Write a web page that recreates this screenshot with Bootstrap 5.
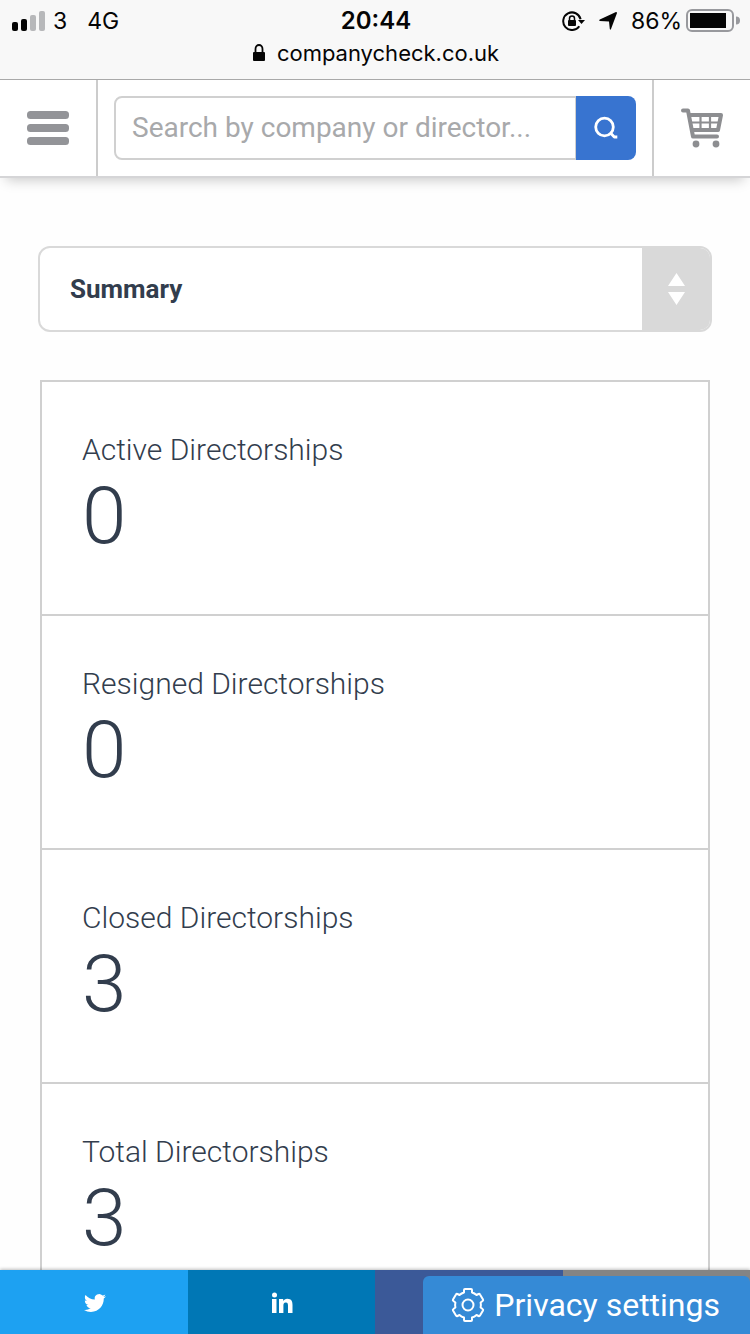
<!DOCTYPE html>
<html lang="en">
<head>
<meta charset="utf-8">
<meta name="viewport" content="width=device-width, initial-scale=1">
<title>Company Check – Directorships</title>
<link href="https://cdn.jsdelivr.net/npm/bootstrap@5.3.0/dist/css/bootstrap.min.css" rel="stylesheet">
<style>
  body { font-family: Roboto, "Liberation Sans", sans-serif; color: #323d4d; background: #fefefe; }
  .status { background: #f8f8f8; border-bottom: 1px solid #a9a9a9; color: #050505; font: 23px/28px Inter, sans-serif; padding: 7px 10px 8px 12px; }
  .status-row { display: grid; grid-template-columns: 1fr auto 1fr; align-items: center; height: 28px; }
  .clock { font-size: 24px; font-weight: 600; }
  .locate { margin: 0 14px; }
  .address { height: 36px; line-height: 36px; font-size: 22px; }
  .topbar { background: #fff; height: 98px; border-bottom: 2px solid #d5d5d7; box-shadow: 0 8px 12px -6px rgba(0,0,0,.22); z-index: 2; }
  .side-btn { width: 98px; background: none; color: #939498; border-radius: 0; }
  .side-left { border: 0 solid #ccc; border-right-width: 2px; }
  .side-right { border: 0 solid #ccc; border-left-width: 2px; }
  .search-box { padding: 0 16px; }
  .search-box .form-control { height: 64px; border: 2px solid #d0d0d0; border-radius: 8px; font-size: 28px; padding: 0 16px 2px; background: #fff; }
  .search-box .form-control::placeholder { color: #a8a9ab; opacity: 1; }
  .search-btn { width: 60px; background: #3874d0; border-radius: 8px; }
  .content { padding: 68px 38px 0; }
  .picker { border: 2px solid #d9d9d9; border-radius: 12px; background: #fff; height: 86px; }
  .picker select { appearance: none; border: 0; background: none; padding: 0 30px; font-size: 26px; font-weight: 700; color: #323d4d; }
  .picker-arrows { width: 68px; background: #d9d9d9; pointer-events: none; }
  .stats { margin: 48px 2px 0; border: 2px solid #d0d0d0; background: #fff; }
  .stat { padding: 49px 40px 48px; border-bottom: 2px solid #d0d0d0; font-weight: 300; }
  .stat dt { font-size: 30px; line-height: 38px; font-weight: 300; }
  .stat dd { font-size: 80px; line-height: 95px; margin: 0 0 2px; }
  .share { height: 64px; box-shadow: 0 -1px 3px rgba(0,0,0,.25); z-index: 2; }
  .share a { color: #fff; padding: 2px 0 0 2px; }
  .tw { background: #1da1f2; } .li { background: #0077b5; } .fb { background: #3b5998; } .em { background: #848484; }
  .privacy { right: 0; bottom: 0; height: 58px; width: 327px; background: #358ad6; color: #fff; font-size: 32px; line-height: 40px; border-radius: 6px 6px 0 0; padding: 0 30px 0 28px; }
  .privacy:hover, .privacy:focus { background: #2d7fc9; color: #fff; }
</style>
</head>
<body>
<div class="d-flex flex-column vh-100 overflow-hidden">
  <div class="status flex-shrink-0">
    <div class="status-row">
      <div class="d-flex align-items-center">
        <svg width="33" height="20" viewBox="0 0 33 20" aria-hidden="true"><g fill="#050505"><rect x="0" y="11" width="6" height="9" rx="2"/><rect x="9" y="8" width="6" height="12" rx="2"/></g><g fill="#b7b8ba"><rect x="18" y="4" width="6" height="16" rx="2"/><rect x="27" y="0" width="6" height="20" rx="2"/></g></svg>
        <span class="ms-2">3</span><span class="ms-3 ps-1">4G</span>
      </div>
      <div class="clock">20:44</div>
      <div class="d-flex align-items-center justify-content-end">
        <svg width="23" height="20" viewBox="0 0 23 20" aria-hidden="true"><path d="M17.300 15.200A8.800 8.800 0 1 1 18.600 8.200" fill="none" stroke="#050505" stroke-width="2"/><path d="M16 9h7l-3.500 4z" fill="#050505"/><rect x="6" y="9" width="8" height="6" rx="1" fill="#050505"/><path d="M7.500 9.500V7.500a2.500 2.500 0 0 1 5 0v2" fill="none" stroke="#050505" stroke-width="1.500"/></svg>
        <svg class="locate" width="18" height="18" viewBox="0 0 18 18" aria-hidden="true"><path d="M17 0q1 0 1 1L12 17q-.7 1.500-1.200 0L10 9.500.800 9Q-.500 8.300.800 7.500z" fill="#050505"/></svg>
        <span>86%</span>
        <svg class="ms-1" width="54" height="24" viewBox="0 0 54 24" aria-hidden="true"><rect x="1" y="1" width="46" height="21" rx="5" fill="none" stroke="#98999d" stroke-width="2"/><rect x="4" y="4" width="36" height="15" fill="#050505"/><path d="M50 7.500a4 4 0 0 1 0 8z" fill="#98999d"/></svg>
      </div>
    </div>
    <div class="address d-flex justify-content-center align-items-center">
      <svg width="12" height="18" viewBox="0 0 12 18" aria-hidden="true"><rect y="8" width="12" height="9" rx="1" fill="#050505"/><path d="M2.500 9V5a3.500 4 0 0 1 7 0v4" fill="none" stroke="#050505" stroke-width="1.800"/></svg>
      <span class="ms-2 ps-1">companycheck.co.uk</span>
    </div>
  </div>

  <header class="topbar d-flex align-items-stretch flex-shrink-0 position-relative">
    <button type="button" class="side-btn side-left p-0" aria-label="Menu">
      <svg width="42" height="34" viewBox="0 0 42 34" fill="currentColor"><rect width="42" height="8" rx="3.500"/><rect y="13" width="42" height="8" rx="3.500"/><rect y="26" width="42" height="8" rx="3.500"/></svg>
    </button>
    <form class="search-box flex-grow-1 d-flex align-items-center" role="search">
      <div class="input-group">
        <input type="search" class="form-control" placeholder="Search by company or director..." aria-label="Search by company or director">
        <button type="button" class="btn search-btn p-0" aria-label="Search">
          <svg width="24" height="24" viewBox="0 0 24 24" fill="none" stroke="#fff" stroke-width="2.800"><circle cx="10.500" cy="11" r="8.800"/><path d="m16.500 17 3.800 4h3" stroke-linejoin="round"/></svg>
        </button>
      </div>
    </form>
    <button type="button" class="side-btn side-right p-0" aria-label="Basket">
      <svg width="42" height="40" viewBox="0 0 42 40" fill="none" stroke="#8d8e91"><path d="M2 2.500h5L12 28.500h24" stroke-width="4" stroke-linecap="round" stroke-linejoin="round"/><path d="M9 7h31l-3 15H12" stroke-width="4" stroke-linejoin="round"/><path d="M10 14.500h28M19.500 7v16M29 7v16" stroke-width="2.200"/><g fill="#8d8e91" stroke="none"><circle cx="15" cy="36" r="3.400"/><circle cx="35" cy="36" r="3.400"/></g></svg>
    </button>
  </header>

  <main class="content flex-grow-1 overflow-hidden">
    <div class="picker d-flex overflow-hidden">
      <select class="flex-grow-1" aria-label="Section">
        <option selected>Summary</option>
      </select>
      <span class="picker-arrows d-flex align-items-center justify-content-center">
        <svg width="17" height="34" viewBox="0 0 17 34" fill="#fff" aria-hidden="true"><path d="M8.500 1 17 14H0zM0 20h17L8.500 33z"/></svg>
      </span>
    </div>
    <dl class="stats">
      <div class="stat"><dt>Active Directorships</dt><dd>0</dd></div>
      <div class="stat"><dt>Resigned Directorships</dt><dd>0</dd></div>
      <div class="stat"><dt>Closed Directorships</dt><dd>3</dd></div>
      <div class="stat"><dt>Total Directorships</dt><dd>3</dd></div>
    </dl>
  </main>

  <footer class="share row g-0 flex-shrink-0 position-relative">
    <a href="#" class="col tw d-flex align-items-center justify-content-center" aria-label="Share on Twitter">
      <svg width="22" height="22" viewBox="0 0 24 24" fill="currentColor"><path d="M23.950 4.570a10 10 0 0 1-2.820.770 4.960 4.960 0 0 0 2.160-2.720c-.950.550-2 .950-3.130 1.180a4.920 4.920 0 0 0-8.380 4.480C7.690 8.090 4.070 6.130 1.640 3.160a4.820 4.820 0 0 0-.670 2.480c0 1.710.870 3.210 2.190 4.100a4.900 4.900 0 0 1-2.230-.620v.060a4.920 4.920 0 0 0 3.950 4.830 5 5 0 0 1-2.210.080 4.940 4.940 0 0 0 4.600 3.420A9.870 9.870 0 0 1 0 19.540a13.990 13.990 0 0 0 7.560 2.210c9.050 0 14-7.500 14-13.980 0-.210 0-.420-.020-.630a9.940 9.940 0 0 0 2.460-2.550z"/></svg>
    </a>
    <a href="#" class="col li d-flex align-items-center justify-content-center" aria-label="Share on LinkedIn">
      <svg width="22" height="22" viewBox="0 0 22 22" fill="currentColor"><circle cx="3.500" cy="3" r="2.500"/><path d="M1 7h4.500v14H1zM8 7h4.200v2c.7-1.300 2.100-2.300 4.100-2.300 4.300 0 5.200 2.800 5.200 6.300v8H17v-7.200c0-1.700-.1-3.400-2.200-3.400s-2.400 1.600-2.400 3.300V21H8z"/></svg>
    </a>
    <a href="#" class="col fb" aria-label="Share on Facebook"></a>
    <a href="#" class="col em" aria-label="Share by email"></a>
    <button type="button" class="privacy btn border-0 position-absolute d-flex align-items-center justify-content-between">
      <svg width="34" height="36" viewBox="0 0 34 36" fill="none" stroke="#fff" stroke-width="2" stroke-linejoin="round" aria-hidden="true"><path d="M14 2h6q1 0 1 1v2.500q2.500.7 4.500 2.500l2-1q1-.4 1.500.500l3 5q.5 1-.4 1.500l-2 1.500q.6 2.500 0 5l2 1.500q.9.500.4 1.500l-3 5q-.5.900-1.500.500l-2-1q-2 1.800-4.500 2.500V33q0 1-1 1h-6q-1 0-1-1v-2.500q-2.500-.7-4.500-2.500l-2 1q-1 .4-1.500-.5l-3-5q-.5-1 .4-1.500l2-1.500q-.6-2.500 0-5l-2-1.500q-.9-.5-.4-1.500l3-5q.5-.9 1.500-.5l2 1q2-1.800 4.500-2.500V3q0-1 1-1z"/><circle cx="17" cy="18" r="5.500"/></svg>
      <span>Privacy settings</span>
    </button>
  </footer>
</div>
<script src="https://cdn.jsdelivr.net/npm/bootstrap@5.3.0/dist/js/bootstrap.bundle.min.js"></script>
</body>
</html>
